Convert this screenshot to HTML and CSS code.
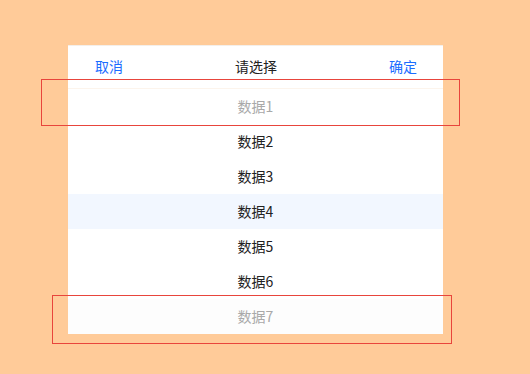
FILE: index.html
```html
<!DOCTYPE html>
<html lang="zh-CN">
<head>
    <meta charset="UTF-8">
    <meta name="viewport" content="width=device-width, initial-scale=1.0">
    <title>请选择</title>
    <link rel="stylesheet" href="styles.css">
</head>
<body>
    <div class="picker">
        <div class="picker-header">
            <span class="action">取消</span>
            <span class="title">请选择</span>
            <span class="action">确定</span>
        </div>
        <div class="picker-list">
            <div class="item faded">数据1</div>
            <div class="item">数据2</div>
            <div class="item">数据3</div>
            <div class="item active">数据4</div>
            <div class="item">数据5</div>
            <div class="item">数据6</div>
            <div class="item faded last">数据7</div>
        </div>
        <div class="mark mark-top"></div>
        <div class="mark mark-bottom"></div>
    </div>
</body>
</html>
```

FILE: styles.css
```css
* {
    margin: 0;
    padding: 0;
    box-sizing: border-box;
    font-family: "Noto Sans CJK SC", "Noto Sans", sans-serif;
}

body {
    background-color: #ffcb99;
    min-height: 100vh;
    padding: 45px 0 0 68px;
}

.picker {
    position: relative;
    width: 375px;
    background-color: #fff;
    border-top: 1px solid #f4efea;
}

.picker-header {
    display: flex;
    justify-content: space-between;
    align-items: center;
    height: 43px;
    padding: 0 26px 2px 27px;
    font-size: 14px;
    border-bottom: 1px solid #fcf4ec;
}

.action {
    color: #1a6dff;
}

.title {
    color: #222;
}

.picker-list {
    display: flex;
    flex-direction: column;
}

.item {
    height: 35px;
    display: flex;
    align-items: center;
    justify-content: center;
    padding-bottom: 2px;
    font-size: 14px;
    color: #222;
}

.item.faded {
    color: #a9a9a9;
}

.item.last {
    background-color: #fdfdfd;
}

.item.active {
    background-color: #f2f7ff;
}

.mark {
    position: absolute;
    border: 1px solid #e8453c;
}

.mark-top {
    left: -27px;
    top: 33px;
    width: 419px;
    height: 47px;
}

.mark-bottom {
    left: -16px;
    top: 249px;
    width: 400px;
    height: 49px;
}
```
